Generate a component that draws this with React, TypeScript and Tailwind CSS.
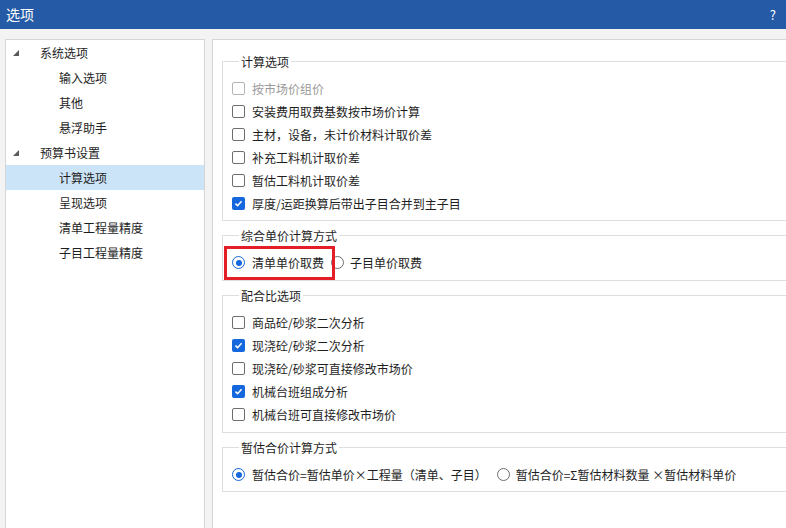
import React from 'react';

const FONT = '"Microsoft YaHei", "Noto Sans CJK SC", "Noto Sans", sans-serif';

const tree = [
  { label: '系统选项', level: 0 },
  { label: '输入选项', level: 1 },
  { label: '其他', level: 1 },
  { label: '悬浮助手', level: 1 },
  { label: '预算书设置', level: 0 },
  { label: '计算选项', level: 1, selected: true },
  { label: '呈现选项', level: 1 },
  { label: '清单工程量精度', level: 1 },
  { label: '子目工程量精度', level: 1 },
];

function Checkbox({ checked, disabled }: { checked?: boolean; disabled?: boolean }) {
  if (checked) {
    return (
      <span className="flex h-[13px] w-[13px] shrink-0 items-center justify-center rounded-[2px] bg-[#1467dc]">
        <svg viewBox="0 0 10 10" className="h-[9px] w-[9px]">
          <path d="M1.6 5.2 L4 7.4 L8.4 2.4" fill="none" stroke="white" strokeWidth="1.7" />
        </svg>
      </span>
    );
  }
  return (
    <span
      className={`h-[13px] w-[13px] shrink-0 rounded-[2px] border bg-white ${
        disabled ? 'border-[#b4b4b4]' : 'border-[#6e6e6e]'
      }`}
    />
  );
}

function Radio({ checked }: { checked?: boolean }) {
  return (
    <span
      className={`flex h-[13px] w-[13px] shrink-0 items-center justify-center rounded-full border bg-white ${
        checked ? 'border-[#1467dc]' : 'border-[#6e6e6e]'
      }`}
    >
      {checked && <span className="h-[6px] w-[6px] rounded-full bg-[#1467dc]" />}
    </span>
  );
}

function CheckRow({ label, checked, disabled }: { label: string; checked?: boolean; disabled?: boolean }) {
  return (
    <div className="flex h-[23px] items-center gap-[7px]">
      <Checkbox checked={checked} disabled={disabled} />
      <span className={disabled ? 'text-[#9a9a9a]' : 'text-[#1e1e1e]'}>{label}</span>
    </div>
  );
}

function Group({ title, pb, children }: { title: string; pb: string; children: React.ReactNode }) {
  return (
    <fieldset className={`w-[575px] border border-[#dedede] pl-[9px] pt-[7px] ${pb}`}>
      <legend className="ml-[7px] px-[2px] leading-[17px] text-[#1e1e1e]">{title}</legend>
      {children}
    </fieldset>
  );
}

export default function App() {
  return (
    <div
      className="flex h-[528px] w-[786px] flex-col overflow-hidden bg-[#f3f3f3] text-[12px]"
      style={{ fontFamily: FONT }}
    >
      <div className="flex h-[29px] shrink-0 items-center justify-between bg-[#245aa6] pl-[6px] pr-[10px] text-white">
        <span className="text-[14px]">选项</span>
        <span className="text-[13px]">?</span>
      </div>

      <div className="flex min-h-0 flex-1 gap-[7px] pl-[5px] pt-[10px]">
        <div className="w-[200px] shrink-0 border border-b-0 border-[#d6d6d6] bg-white">
          {tree.map((item) => (
            <div
              key={item.label}
              className={`flex h-[25px] items-center ${item.selected ? 'bg-[#cce4f7]' : ''} ${
                item.level === 0 ? 'pl-[7px]' : 'pl-[53px]'
              }`}
            >
              {item.level === 0 && (
                <svg viewBox="0 0 6 6" className="mr-[21px] h-[6px] w-[6px]">
                  <polygon points="6,0 6,6 0,6" fill="#5a5a5a" />
                </svg>
              )}
              <span className="text-[#1e1e1e]">{item.label}</span>
            </div>
          ))}
        </div>

        <div className="flex w-[600px] shrink-0 flex-col gap-[6px] border border-b-0 border-[#d6d6d6] bg-white pl-[9px] pt-[13px]">
          <Group title="计算选项" pb="pb-[5px]">
            <CheckRow label="按市场价组价" disabled />
            <CheckRow label="安装费用取费基数按市场价计算" />
            <CheckRow label="主材，设备，未计价材料计取价差" />
            <CheckRow label="补充工料机计取价差" />
            <CheckRow label="暂估工料机计取价差" />
            <CheckRow label="厚度/运距换算后带出子目合并到主子目" checked />
          </Group>

          <Group title="综合单价计算方式" pb="pb-[6px]">
            <div className="relative flex h-[23px] items-center">
              <Radio checked />
              <span className="ml-[7px] text-[#1e1e1e]">清单单价取费</span>
              <span className="ml-[7px]">
                <Radio />
              </span>
              <span className="ml-[6px] text-[#1e1e1e]">子目单价取费</span>
              <div className="absolute left-[-8px] top-[-5px] h-[34px] w-[111px] border-[3px] border-[#e41e26]" />
            </div>
          </Group>

          <Group title="配合比选项" pb="pb-[6px]">
            <CheckRow label="商品砼/砂浆二次分析" />
            <CheckRow label="现浇砼/砂浆二次分析" checked />
            <CheckRow label="现浇砼/砂浆可直接修改市场价" />
            <CheckRow label="机械台班组成分析" checked />
            <CheckRow label="机械台班可直接修改市场价" />
          </Group>

          <Group title="暂估合价计算方式" pb="pb-[5px]">
            <div className="flex h-[23px] items-center">
              <Radio checked />
              <span className="ml-[7px] text-[#1e1e1e]">暂估合价=暂估单价×工程量（清单、子目）</span>
              <span className="ml-[10px]">
                <Radio />
              </span>
              <span className="ml-[6px] text-[#1e1e1e]">暂估合价=Σ暂估材料数量 ×暂估材料单价</span>
            </div>
          </Group>
        </div>
      </div>
    </div>
  );
}
